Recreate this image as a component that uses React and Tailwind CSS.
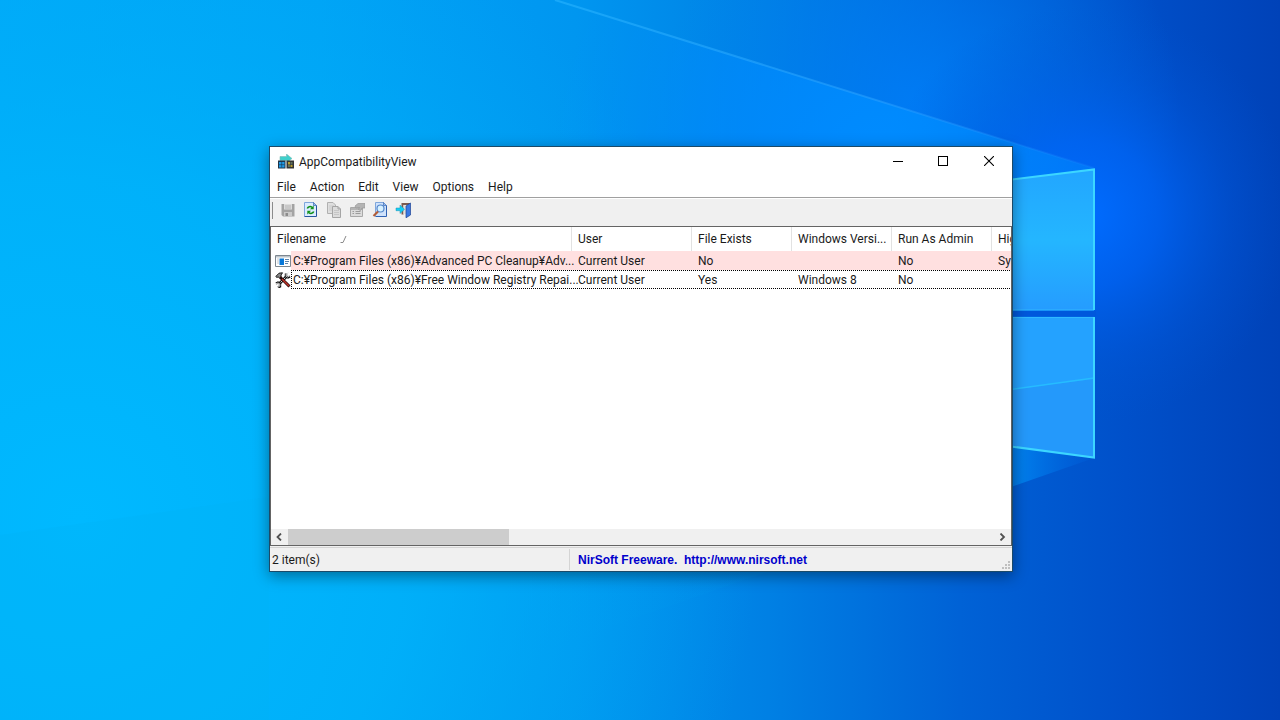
const COLUMNS = [
  { name: "Filename", width: "w-[301px]" },
  { name: "User", width: "w-[120px]" },
  { name: "File Exists", width: "w-[100px]" },
  { name: "Windows Versi...", width: "w-[100px]" },
  { name: "Run As Admin", width: "w-[100px]" },
  { name: "Hig", width: "w-auto" },
];

const MENUS = ["File", "Action", "Edit", "View", "Options", "Help"];

function Wallpaper() {
  return (
    <svg
      className="absolute inset-0 h-full w-full"
      viewBox="0 0 1280 720"
      preserveAspectRatio="xMidYMid slice"
      aria-hidden="true"
    >
      <defs>
        <linearGradient id="base" x1="0" y1="0" x2="1280" y2="0" gradientUnits="userSpaceOnUse">
          <stop offset="0" stopColor="#00aafb" />
          <stop offset="0.25" stopColor="#00a3f7" />
          <stop offset="0.45" stopColor="#0096f0" />
          <stop offset="0.6" stopColor="#0080e4" />
          <stop offset="0.75" stopColor="#0062d6" />
          <stop offset="0.88" stopColor="#0050ca" />
          <stop offset="1" stopColor="#0042b8" />
        </linearGradient>
        <radialGradient id="left" cx="80" cy="520" r="680" gradientUnits="userSpaceOnUse">
          <stop offset="0" stopColor="#00b9ff" />
          <stop offset="0.5" stopColor="#00b4fa" stopOpacity="0.75" />
          <stop offset="1" stopColor="#00a8f0" stopOpacity="0" />
        </radialGradient>
        <radialGradient id="glow" cx="1085" cy="215" r="210" gradientUnits="userSpaceOnUse">
          <stop offset="0" stopColor="#006cff" />
          <stop offset="0.35" stopColor="#0064f6" stopOpacity="0.75" />
          <stop offset="0.7" stopColor="#005ae2" stopOpacity="0.3" />
          <stop offset="1" stopColor="#0054d4" stopOpacity="0" />
        </radialGradient>
        <radialGradient id="beamGlow" cx="880" cy="160" r="330" gradientUnits="userSpaceOnUse">
          <stop offset="0" stopColor="#008cff" />
          <stop offset="0.5" stopColor="#008cff" stopOpacity="0.6" />
          <stop offset="1" stopColor="#0092ff" stopOpacity="0" />
        </radialGradient>
        <radialGradient id="aboveBeam" cx="920" cy="110" r="260" gradientUnits="userSpaceOnUse">
          <stop offset="0" stopColor="#0080fc" stopOpacity="0.8" />
          <stop offset="1" stopColor="#0080f4" stopOpacity="0" />
        </radialGradient>
        <linearGradient id="paneTop" x1="0" y1="170" x2="0" y2="310" gradientUnits="userSpaceOnUse">
          <stop offset="0" stopColor="#22a6ff" />
          <stop offset="0.5" stopColor="#24b6ff" />
          <stop offset="1" stopColor="#259cff" />
        </linearGradient>
        <linearGradient id="lower" x1="500" y1="0" x2="1094" y2="0" gradientUnits="userSpaceOnUse">
          <stop offset="0" stopColor="#00a8f0" stopOpacity="0" />
          <stop offset="0.6" stopColor="#0090ea" stopOpacity="0.2" />
          <stop offset="0.88" stopColor="#0084f0" stopOpacity="0.8" />
          <stop offset="1" stopColor="#0062e0" stopOpacity="0.2" />
        </linearGradient>
        <linearGradient id="ray" x1="555" y1="0" x2="1094" y2="168" gradientUnits="userSpaceOnUse">
          <stop offset="0" stopColor="#28b4ff" stopOpacity="0.6" />
          <stop offset="0.6" stopColor="#30a4ff" stopOpacity="0.5" />
          <stop offset="1" stopColor="#1c86ff" stopOpacity="0.2" />
        </linearGradient>
      </defs>
      <rect width="1280" height="720" fill="url(#base)" />
      <rect width="1280" height="720" fill="url(#left)" />
      <rect width="1280" height="720" fill="url(#aboveBeam)" />
      <rect width="1280" height="720" fill="url(#glow)" />
      <path d="M555 0 1094 168V340H400V0Z" fill="url(#beamGlow)" />
      <path d="M1094 458 400 700V440H1094Z" fill="url(#lower)" />
      <path d="M0 535 269 497V720H0Z" fill="#00b4f6" opacity="0.3" />
      <path d="M555 0 1094 168" stroke="url(#ray)" strokeWidth="2" />
      <path d="M1000 181 1094 169V310H1000Z" fill="url(#paneTop)" />
      <path d="M1000 317H1094V458L1000 445Z" fill="#2499fb" />
      <path d="M1000 317H1094V379L1000 391Z" fill="#24a2ff" />
      <path d="M1000 391 1094 378" stroke="#26bcff" strokeWidth="1.5" />
      <path d="M1000 310H1094M1000 317.5H1094" stroke="#30b8ff" strokeWidth="1" />
      <rect x="1000" y="311" width="96" height="5.500" fill="#0058dc" />
      <path d="M1000 181 1094 169.500V310M1094 317V457.500L1000 445" fill="none" stroke="#3cd6ff" strokeWidth="2" />
    </svg>
  );
}

function AppIcon() {
  return (
    <svg className="h-4 w-4" viewBox="0 0 16 16" aria-hidden="true">
      <path d="M2 2.500H8.500V0L14 4.500 9 8.500V6.500H2Z" fill="#3fd0cc" stroke="#7fb8b4" strokeWidth=".6" />
      <path d="M0 6.500H7.500V14.500H0Z" fill="#1f3448" />
      <path d="M1 8H6.500V13.500H1Z" fill="#1f9be8" />
      <path d="M3.700 8V13.500M1 10.700H6.500" stroke="#1f3448" strokeWidth=".6" />
      <path d="M8.500 6.500H16V14.500H8.500Z" fill="#343434" />
      <path d="M10 8H12V10.500H10ZM12.500 11H14.500V13H12.500Z" fill="#b8a030" />
      <path d="M12.500 8H14.500V10.500H12.500ZM10 11H12V13H10Z" fill="#60705c" />
    </svg>
  );
}

function SaveIcon() {
  return (
    <svg className="h-4 w-4" viewBox="0 0 16 16" aria-hidden="true">
      <path d="M1.500 2H14.500V14.500H3L1.500 13Z" fill="#a3a3a3" />
      <path d="M4 2H12V7.500H4Z" fill="#dcdcdc" />
      <path d="M5 4H11M5 6H11" stroke="#b4b4b4" />
      <path d="M4 10H12V14.500H4Z" fill="#c9c9c9" />
      <path d="M5.500 11H8V14H5.500Z" fill="#8c8c8c" />
    </svg>
  );
}

function RefreshIcon() {
  return (
    <svg className="h-4 w-4" viewBox="0 0 16 16" aria-hidden="true">
      <path d="M1.500.5H10.500L13.500 3.500V14.500H1.500Z" fill="#dcecff" />
      <path d="M1.500 14.500V.5H10.500" fill="none" stroke="#7ea6dc" />
      <path d="M10.500.5 13.500 3.500V14.500H1.500" fill="none" stroke="#26559e" />
      <path d="M10.500.5V3.500H13.500" fill="#9dc0ee" stroke="#3b6cb4" strokeWidth=".7" />
      <path d="M4.300 6.500C5 4.500 7.500 4 9 5.300" fill="none" stroke="#109018" strokeWidth="1.600" />
      <path d="M10.700 3.500V7.200H7Z" fill="#109018" />
      <path d="M10.700 9.500C10 11.500 7.500 12 6 10.700" fill="none" stroke="#109018" strokeWidth="1.600" />
      <path d="M4.300 12.500V8.800H8Z" fill="#109018" />
    </svg>
  );
}

function CopyIcon() {
  return (
    <svg className="h-4 w-4" viewBox="0 0 16 16" aria-hidden="true">
      <path d="M1.500.5H7L9.500 3V11.500H1.500Z" fill="#dedede" stroke="#b0b0b0" />
      <path d="M3 4H8M3 6H8M3 8H8" stroke="#cacaca" />
      <path d="M6.500 4.500H12L14.500 7V15.500H6.500Z" fill="#dcdcdc" stroke="#a5a5a5" />
      <path d="M12 4.500V7H14.500" fill="none" stroke="#a5a5a5" />
      <path d="M8 8.500H13M8 10.500H13M8 12.500H13" stroke="#c6c6c6" />
    </svg>
  );
}

function PropertiesIcon() {
  return (
    <svg className="h-4 w-4" viewBox="0 0 16 16" aria-hidden="true">
      <path d="M1.500 5.500H13.500V14.500H1.500Z" fill="#dcdcdc" stroke="#a8a8a8" />
      <path d="M2 6H13V8H2Z" fill="#b4b4b4" />
      <path d="M3.500 9.500H5M6.500 9.500H11.500M3.500 11.500H5M6.500 11.500H11.500" stroke="#9c9c9c" />
      <path d="M6 4 9 1.500H16V6H13L11.500 8.500 9.500 7.500 10.500 5.500 7 6Z" fill="#b4b4b4" stroke="#989898" strokeWidth=".7" />
    </svg>
  );
}

function FindIcon() {
  return (
    <svg className="h-4 w-4" viewBox="0 0 16 16" aria-hidden="true">
      <path d="M3.500.5H11.500L14.500 3.500V14.500H3.500Z" fill="#cfe2fb" />
      <path d="M3.500 14.500V.5H11.500" fill="none" stroke="#7ea6dc" />
      <path d="M11.500.5 14.500 3.500V14.500H3.500" fill="none" stroke="#2f62b4" />
      <path d="M11.500.5V3.500H14.500" fill="#9dc0ee" stroke="#3b6cb4" strokeWidth=".7" />
      <circle cx="8.500" cy="6.500" r="3.500" fill="#d8f2ff" stroke="#5688cc" strokeWidth="1.200" />
      <path d="M6 9.500 1.500 14" stroke="#b25d38" strokeWidth="2.200" />
    </svg>
  );
}

function ExitIcon() {
  return (
    <svg className="h-4 w-4" viewBox="0 0 16 16" aria-hidden="true">
      <path d="M6.500 1H15V12.500H13V3H8.500V12.500H6.500Z" fill="#7a5a50" />
      <path d="M8.500 3H12V12H8.500Z" fill="#e4e0dc" />
      <path d="M11 4 15.500 1V13L11 15.800Z" fill="#3a78e4" stroke="#1e4494" strokeWidth=".7" />
      <path d="M1 6H5V3L9.500 7.300 5 11.500V8.700H1Z" fill="#12d0f4" stroke="#2290b4" strokeWidth=".5" />
    </svg>
  );
}

function ProgramIcon() {
  return (
    <svg className="h-4 w-4 shrink-0" viewBox="0 0 16 16" aria-hidden="true">
      <path d="M.5 2.500H15.500V13.500H.5Z" fill="#fff" stroke="#7d8790" />
      <path d="M1 3H15V4.500H1Z" fill="#bcc4ca" />
      <path d="M4.500 5.500H9V12H4.500Z" fill="#0878d8" />
      <path d="M2 6H4M2 8H4M2 10H4" stroke="#c0c8d0" />
      <path d="M10 6.500H14M10 8.500H14M10 10.500H13" stroke="#5a84ac" />
    </svg>
  );
}

function ToolsIcon() {
  return (
    <svg className="h-4 w-4 shrink-0" viewBox="0 0 16 16" aria-hidden="true">
      <path d="M4 12 12 4" stroke="#161616" strokeWidth="2.800" />
      <path d="M4 12 12 4" stroke="#d4d4d4" strokeWidth="1" />
      <path d="M11 1.500V4.500L13 5.500 15 4.500" fill="none" stroke="#161616" strokeWidth="2.400" />
      <path d="M13.500.8 11.200 2V4.300L12.500 5 15 3.500" fill="none" stroke="#d8d8d8" strokeWidth="1" />
      <path d="M1 11.500 3 10.500 5 11.500V14.500L3 15.500" fill="none" stroke="#161616" strokeWidth="2.400" />
      <path d="M.8 12 3 11 4.800 12V14L3 15.200" fill="none" stroke="#d8d8d8" strokeWidth="1" />
      <path d="M.8 4.500 4 1.200 7.500.8 6 3 6 5 4.500 5.800 3 4.800 2 5.500Z" fill="#8c8c8c" stroke="#161616" />
      <path d="M5.200 5.200 14.500 14.500" stroke="#2a0808" strokeWidth="3" />
      <path d="M7 7 14 14" stroke="#c0342a" strokeWidth="1.400" />
    </svg>
  );
}

const TOOLS = [
  { label: "Save", Icon: SaveIcon, disabled: true },
  { label: "Refresh", Icon: RefreshIcon },
  { label: "Copy", Icon: CopyIcon, disabled: true },
  { label: "Properties", Icon: PropertiesIcon, disabled: true },
  { label: "Find", Icon: FindIcon },
  { label: "Exit", Icon: ExitIcon },
];

function TitleBar() {
  return (
    <header className="flex h-[30px] shrink-0 items-start bg-white">
      <div className="flex h-full grow items-center gap-[5px] pl-2">
        <AppIcon />
        <h1>AppCompatibilityView</h1>
      </div>
      <button type="button" aria-label="Minimize" className="flex h-7 w-[45px] items-center justify-center">
        <svg className="h-[10px] w-[10px]" viewBox="0 0 10 10" shapeRendering="crispEdges">
          <path d="M0 5.500H10" stroke="#000" />
        </svg>
      </button>
      <button type="button" aria-label="Maximize" className="flex h-7 w-[46px] items-center justify-center">
        <svg className="h-[10px] w-[10px]" viewBox="0 0 10 10" shapeRendering="crispEdges">
          <path d="M.5.5H9.500V9.500H.5Z" fill="none" stroke="#000" />
        </svg>
      </button>
      <button type="button" aria-label="Close" className="flex h-7 w-[46px] items-center justify-center">
        <svg className="h-[10px] w-[10px]" viewBox="0 0 10 10">
          <path d="M0 0 10 10M10 0 0 10" stroke="#000" strokeWidth="1.100" />
        </svg>
      </button>
    </header>
  );
}

function FileCell({ Icon, text, highlight }) {
  return (
    <div className="flex h-[19px] items-center">
      <span className="flex h-full w-5 shrink-0 items-center bg-white pl-1">
        <Icon />
      </span>
      <span
        className={
          "flex h-full min-w-0 grow items-center pl-px whitespace-nowrap " +
          (highlight ? "border-l border-[#ffe0e0] bg-[#ffe0e0]" : "border-l border-dotted border-black")
        }
      >
        {text}
      </span>
    </div>
  );
}

const ROWS = [
  {
    Icon: ProgramIcon,
    file: "C:¥Program Files (x86)¥Advanced PC Cleanup¥Adv...",
    cells: ["Current User", "No", "", "No", "Sys"],
    highlight: true,
  },
  {
    Icon: ToolsIcon,
    file: "C:¥Program Files (x86)¥Free Window Registry Repai...",
    cells: ["Current User", "Yes", "Windows 8", "No", ""],
    highlight: false,
  },
];

const FOCUS_ROW =
  "h-[19px] bg-[linear-gradient(90deg,#000_50%,transparent_50%),linear-gradient(90deg,#000_50%,transparent_50%)] [background-size:2px_1px] [background-position:0_0,0_100%] bg-repeat-x";

function FileTable() {
  return (
    <table className="w-full table-fixed border-separate border-spacing-0 text-left">
      <thead>
        <tr className="h-6">
          {COLUMNS.map((c, i) => (
            <th
              key={c.name}
              className={
                "overflow-hidden py-0 pl-[6px] font-normal whitespace-nowrap " +
                c.width +
                (i < 5 ? " border-r border-[#e2e2e2]" : "")
              }
            >
              {i === 0 ? (
                <span className="flex items-center gap-[14px]">
                  {c.name}
                  <svg className="h-[7px] w-[7px]" viewBox="0 0 7 7" aria-hidden="true">
                    <path d="M.5 6.500H3L6 0" fill="none" stroke="#8a8a8a" />
                  </svg>
                </span>
              ) : (
                c.name
              )}
            </th>
          ))}
        </tr>
      </thead>
      <tbody>
        {ROWS.map((row) => (
          <tr key={row.file} className={row.highlight ? "h-[19px] bg-[#ffe0e0]" : FOCUS_ROW}>
            <td className="p-0">
              <FileCell Icon={row.Icon} text={row.file} highlight={row.highlight} />
            </td>
            {row.cells.map((t, i) => (
              <td key={i} className="overflow-hidden py-0 pl-[6px] whitespace-nowrap">
                {t}
              </td>
            ))}
          </tr>
        ))}
      </tbody>
    </table>
  );
}

function ScrollBar() {
  return (
    <div className="flex h-4 shrink-0 bg-[#f0f0f0]">
      <button type="button" aria-label="Scroll left" className="flex w-[17px] items-center justify-center">
        <svg className="h-2 w-[7px]" viewBox="0 0 7 8">
          <path d="M5 .5 1.500 4 5 7.500" fill="none" stroke="#505050" strokeWidth="1.800" />
        </svg>
      </button>
      <div className="grow">
        <div className="h-full w-[221px] bg-[#cdcdcd]" />
      </div>
      <button type="button" aria-label="Scroll right" className="flex w-[17px] items-center justify-center">
        <svg className="h-2 w-[7px]" viewBox="0 0 7 8">
          <path d="M1.500 .5 5 4 1.500 7.500" fill="none" stroke="#505050" strokeWidth="1.800" />
        </svg>
      </button>
    </div>
  );
}

export default function App() {
  return (
    <div className="relative min-h-screen overflow-hidden bg-[#0090f0] font-['Roboto','Noto_Sans_CJK_JP',sans-serif] text-[12px] leading-4 text-[#1a1a1a]">
      <Wallpaper />
      <main className="absolute top-[146px] left-[269px] flex h-[426px] w-[744px] flex-col border border-[#1c4a68] bg-[#f0f0f0] shadow-[0_4px_14px_rgba(0,0,0,0.4)]">
        <TitleBar />
        <nav className="flex h-5 shrink-0 items-center gap-[14px] bg-white pl-[7px]">
          {MENUS.map((m) => (
            <button key={m} type="button">
              {m}
            </button>
          ))}
        </nav>
        <div className="flex h-[29px] shrink-0 items-start border-t border-[#a0a0a0] pt-[4px] pl-[2px] shadow-[inset_0_1px_0_#ffffff]">
          <div className="mr-[7px] h-[17px] w-px bg-[#8c8c8c]" />
          <div className="flex gap-[7px]">
            {TOOLS.map(({ label, Icon, disabled }) => (
              <button key={label} type="button" aria-label={label} disabled={disabled}>
                <Icon />
              </button>
            ))}
          </div>
        </div>
        <section className="flex min-h-0 grow flex-col border border-[#646464] bg-white">
          <div className="grow overflow-hidden">
            <FileTable />
          </div>
          <ScrollBar />
        </section>
        <footer className="mt-px flex h-6 shrink-0 border-t border-[#d4d4d4]">
          <div className="my-px flex w-[300px] items-center border-r border-[#d4d4d4] pl-[2px]">2 item(s)</div>
          <a
            href="http://www.nirsoft.net"
            className="flex grow items-center pl-2 font-['Liberation_Sans',sans-serif] text-[12px] font-bold whitespace-pre text-[#0000cc]"
          >
            {"NirSoft Freeware.  http://www.nirsoft.net"}
          </a>
          <svg className="mr-[2px] mb-[2px] h-2 w-2 self-end" viewBox="0 0 8 8" fill="#bfbfbf" aria-hidden="true">
            <path d="M6 0H8V2H6ZM3 3H5V5H3ZM6 3H8V5H6ZM0 6H2V8H0ZM3 6H5V8H3ZM6 6H8V8H6Z" />
          </svg>
        </footer>
      </main>
    </div>
  );
}
